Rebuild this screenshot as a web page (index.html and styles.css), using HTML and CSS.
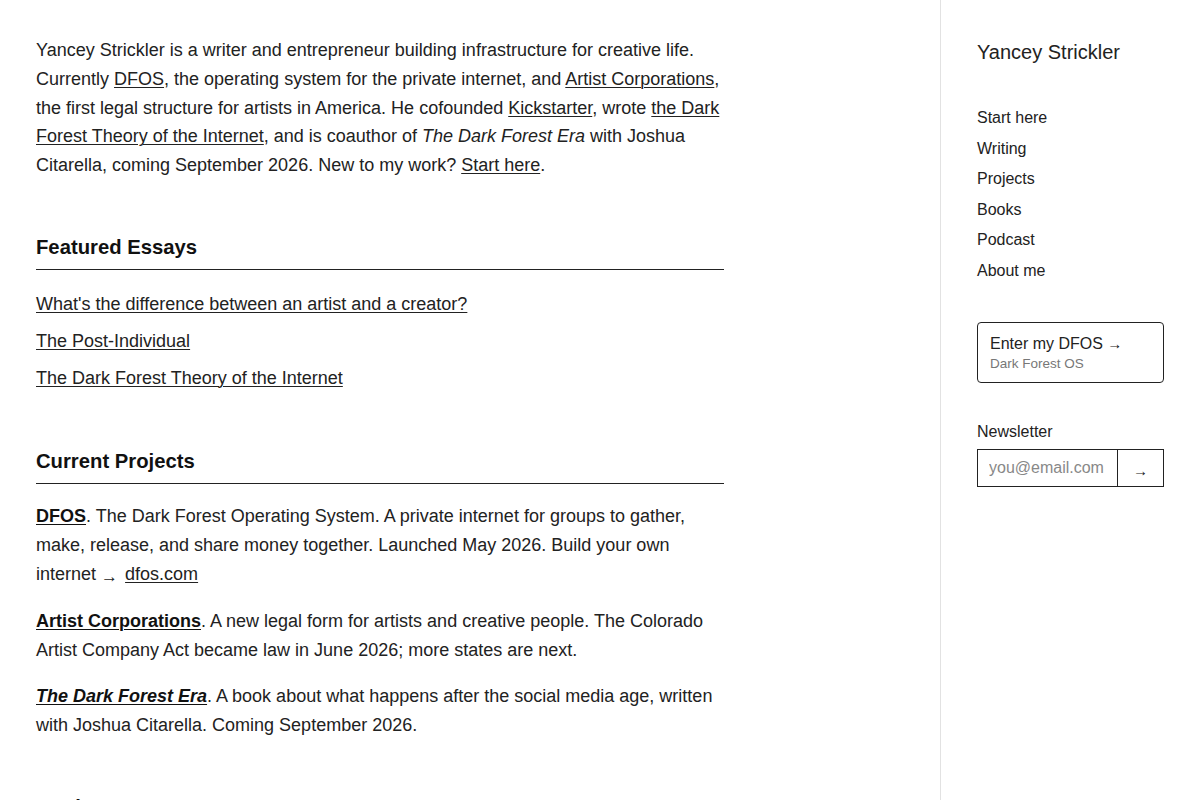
FILE: index.html
```html
<!DOCTYPE html>
<html lang="en">
<head>
<meta charset="utf-8">
<title>Yancey Strickler</title>
<link rel="stylesheet" href="styles.css">
</head>
<body>
<div class="layout">
  <main class="main">
    <div class="content">
      <p class="intro">Yancey Strickler is a writer and entrepreneur building infrastructure for creative life. Currently <a href="#">DFOS</a>, the operating system for the private internet, and <a href="#">Artist Corporations</a>, the first legal structure for artists in America. He cofounded <a href="#">Kickstarter</a>, wrote <a href="#">the Dark Forest Theory of the Internet</a>, and is coauthor of <em>The Dark Forest Era</em> with Joshua Citarella, coming September 2026. New to my work? <a href="#">Start here</a>.</p>

      <section class="section">
        <h2 class="section-title">Featured Essays</h2>
        <ul class="essay-list">
          <li><a href="#">What's the difference between an artist and a creator?</a></li>
          <li><a href="#">The Post-Individual</a></li>
          <li><a href="#">The Dark Forest Theory of the Internet</a></li>
        </ul>
      </section>

      <section class="section">
        <h2 class="section-title">Current Projects</h2>
        <p class="project"><a class="project-name" href="#">DFOS</a>. The Dark Forest Operating System. A private internet for groups to gather, make, release, and share money together. Launched May 2026. Build your own internet <span class="arrow">→</span> <a href="#">dfos.com</a></p>
        <p class="project"><a class="project-name" href="#">Artist Corporations</a>. A new legal form for artists and creative people. The Colorado Artist Company Act became law in June 2026; more states are next.</p>
        <p class="project"><a class="project-name" href="#"><em>The Dark Forest Era</em></a>. A book about what happens after the social media age, written with Joshua Citarella. Coming September 2026.</p>
      </section>

      <section class="section">
        <h2 class="section-title">Books</h2>
        <ul class="essay-list">
          <li><a href="#">This Could Be Our Future</a></li>
        </ul>
      </section>
    </div>
  </main>

  <aside class="sidebar">
    <div class="site-name">Yancey Strickler</div>
    <nav>
      <ul class="nav-list">
        <li><a href="#">Start here</a></li>
        <li><a href="#">Writing</a></li>
        <li><a href="#">Projects</a></li>
        <li><a href="#">Books</a></li>
        <li><a href="#">Podcast</a></li>
        <li><a href="#">About me</a></li>
      </ul>
    </nav>

    <a class="dfos-card" href="#">
      <span class="dfos-title">Enter my DFOS <span class="dfos-arrow">→</span></span>
      <span class="dfos-sub">Dark Forest OS</span>
    </a>

    <form class="newsletter">
      <label class="newsletter-label" for="email">Newsletter</label>
      <div class="newsletter-row">
        <input class="newsletter-input" id="email" type="email" placeholder="you@email.com">
        <button class="newsletter-btn" type="button">→</button>
      </div>
    </form>
  </aside>
</div>
</body>
</html>
```

FILE: styles.css
```css
* {
  box-sizing: border-box;
}

html, body {
  margin: 0;
  padding: 0;
  background: #fff;
}

body {
  font-family: "Liberation Sans", Arial, Helvetica, sans-serif;
  color: #222;
  font-size: 18px;
  line-height: 1.6;
}

a {
  color: inherit;
  text-decoration: underline;
  text-underline-offset: 2px;
  text-decoration-thickness: 1px;
}

.layout {
  display: flex;
  min-height: 100vh;
}

/* main column */
.main {
  flex: 1;
  padding: 36px 36px 60px;
}

.content {
  max-width: 688px;
}

.intro {
  margin: 0;
}

.section {
  margin-top: 55px;
}

.section-title {
  margin: 0 0 18px;
  padding-bottom: 10px;
  font-size: 20.25px;
  line-height: 24px;
  font-weight: 700;
  color: #111;
  border-bottom: 1px solid #222;
}

.essay-list {
  list-style: none;
  margin: 0;
  padding: 2px 0 2px;
}

.essay-list li {
  margin-bottom: 8px;
}

.essay-list li:last-child {
  margin-bottom: 0;
}

.project {
  margin: 0 0 18px;
}

.project:last-child {
  margin-bottom: 0;
}

.project-name {
  font-weight: 700;
  color: #111;
}

.arrow {
  font-size: 17px;
  position: relative;
  top: 2px;
  margin-right: 2px;
}

/* sidebar */
.sidebar {
  width: 260px;
  flex-shrink: 0;
  border-left: 1px solid #e2e2e2;
  padding: 36px 36px;
  font-size: 16px;
}

.site-name {
  font-size: 20px;
  line-height: 32px;
  color: #222;
}

.nav-list {
  list-style: none;
  margin: 37px 0 0;
  padding: 0;
}

.nav-list li {
  line-height: 25.6px;
  margin-bottom: 5px;
}

.nav-list li:last-child {
  margin-bottom: 0;
}

.nav-list a {
  text-decoration: none;
}

.dfos-card {
  display: flex;
  flex-direction: column;
  margin-top: 38px;
  padding: 10px 12px 9px;
  border: 1px solid #222;
  border-radius: 4px;
  text-decoration: none;
}

.dfos-title {
  font-size: 16px;
  line-height: 22px;
}

.dfos-arrow {
  font-size: 15px;
}

.dfos-sub {
  font-size: 13.5px;
  line-height: 18px;
  color: #777;
}

.newsletter {
  margin-top: 36px;
}

.newsletter-label {
  display: block;
  line-height: 25.6px;
  margin-bottom: 5px;
}

.newsletter-row {
  display: flex;
  height: 38px;
  border: 1px solid #222;
}

.newsletter-input {
  flex: 1;
  min-width: 0;
  border: 0;
  padding: 0 11px;
  font-family: inherit;
  font-size: 16px;
  color: #222;
  background: #fff;
  outline: none;
}

.newsletter-input::placeholder {
  color: #888;
}

.newsletter-btn {
  width: 46px;
  border: 0;
  border-left: 1px solid #222;
  background: #fff;
  font-family: inherit;
  font-size: 15px;
  color: #222;
  padding: 4px 0 0;
  cursor: pointer;
}
```
